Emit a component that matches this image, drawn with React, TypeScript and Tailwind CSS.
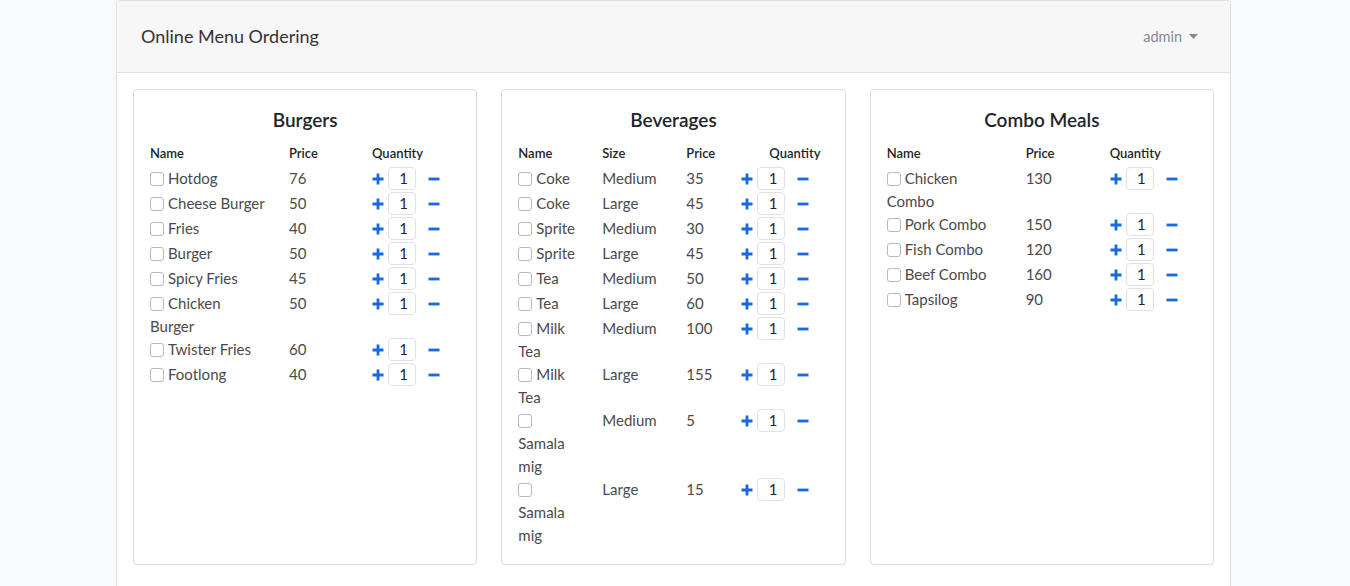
import React from "react"

type Item = { name: string[]; size?: string; price: number }

const burgers: Item[] = [
  { name: ["Hotdog"], price: 76 },
  { name: ["Cheese Burger"], price: 50 },
  { name: ["Fries"], price: 40 },
  { name: ["Burger"], price: 50 },
  { name: ["Spicy Fries"], price: 45 },
  { name: ["Chicken", "Burger"], price: 50 },
  { name: ["Twister Fries"], price: 60 },
  { name: ["Footlong"], price: 40 },
]

const beverages: Item[] = [
  { name: ["Coke"], size: "Medium", price: 35 },
  { name: ["Coke"], size: "Large", price: 45 },
  { name: ["Sprite"], size: "Medium", price: 30 },
  { name: ["Sprite"], size: "Large", price: 45 },
  { name: ["Tea"], size: "Medium", price: 50 },
  { name: ["Tea"], size: "Large", price: 60 },
  { name: ["Milk", "Tea"], size: "Medium", price: 100 },
  { name: ["Milk", "Tea"], size: "Large", price: 155 },
  { name: ["", "Samala", "mig"], size: "Medium", price: 5 },
  { name: ["", "Samala", "mig"], size: "Large", price: 15 },
]

const combos: Item[] = [
  { name: ["Chicken", "Combo"], price: 130 },
  { name: ["Pork Combo"], price: 150 },
  { name: ["Fish Combo"], price: 120 },
  { name: ["Beef Combo"], price: 160 },
  { name: ["Tapsilog"], price: 90 },
]

const Plus = () => (
  <svg width="12" height="12" viewBox="0 0 12 12" className="shrink-0">
    <path d="M4.6 0.5h2.8v4.1h4.1v2.8H7.4v4.1H4.6V7.4H0.5V4.6h4.1z" fill="#1668e3" />
  </svg>
)

const Minus = () => (
  <svg width="12" height="12" viewBox="0 0 12 12" className="shrink-0">
    <rect x="0.5" y="4.6" width="11" height="2.8" fill="#1668e3" />
  </svg>
)

const Check = () => (
  <span className="inline-block w-[14px] h-[14px] shrink-0 rounded-[3px] border border-[#b9b9b9] bg-white mr-[4px]" />
)

const NameCell = ({ lines }: { lines: string[] }) => (
  <div className="leading-[23px]">
    <div className="flex items-center h-[23px]">
      <Check />
      <span>{lines[0]}</span>
    </div>
    {lines.slice(1).map((l, i) => (
      <div key={i} className="h-[23px]">{l}</div>
    ))}
  </div>
)

const Qty = () => (
  <div className="flex items-center h-[23px]">
    <Plus />
    <div className="ml-[4px] w-[28px] h-[23px] border border-[#dee2e6] rounded-[4px] flex items-center justify-end pr-[7px] text-[15px] text-[#212529]">1</div>
    <span className="ml-[12px]"><Minus /></span>
  </div>
)

const MenuCard = ({ title, items, cols, qtyPad }: { title: string; items: Item[]; cols: string; qtyPad?: string }) => {
  const hasSize = items.some((i) => i.size)
  return (
    <div className="h-full border border-[#dcdcdc] rounded-[4px] bg-white px-4 pt-[17px] pb-[17px]">
      <h5 className="text-center text-[19px] font-semibold text-[#212529] leading-[26px] mb-[10px]">{title}</h5>
      <div className={`grid ${cols} text-[13px] font-semibold text-[#212529] leading-[20px] mb-[4px]`}>
        <div>Name</div>
        {hasSize && <div>Size</div>}
        <div>Price</div>
        <div className={qtyPad}>Quantity</div>
      </div>
      {items.map((it, idx) => (
        <div key={idx} className={`grid ${cols} items-start min-h-[25px] text-[15px] text-[#4a4a4a]`}>
          <NameCell lines={it.name} />
          {hasSize && <div className="leading-[23px]">{it.size}</div>}
          <div className="leading-[23px]">{it.price}</div>
          <Qty />
        </div>
      ))}
    </div>
  )
}

export default function App() {
  return (
    <div className="min-h-[586px] bg-[#f8f9fa]" style={{ fontFamily: "Lato, 'Noto Sans', sans-serif" }}>
      <div className="ml-[116px] w-[1115px]">
        <div className="border border-[#dfdfdf] rounded-[4px] bg-white">
          <div className="h-[72px] bg-[#f7f7f7] border-b border-[#dfdfdf] flex items-center justify-between pl-6 pr-8 rounded-t-[4px]">
            <span className="text-[18px] text-[#333]">Online Menu Ordering</span>
            <span className="flex items-center text-[14.5px] text-[#858796]">
              admin
              <svg width="9" height="5" viewBox="0 0 9 5" className="ml-[7px]">
                <path d="M0 0h9L4.5 5z" fill="#858796" />
              </svg>
            </span>
          </div>
          <div className="px-4 pt-4 pb-8 grid grid-cols-3 gap-6">
            <MenuCard title="Burgers" items={burgers} cols="grid-cols-[139px_83px_1fr]" />
            <MenuCard title="Beverages" items={beverages} cols="grid-cols-[84px_84px_55px_1fr]" qtyPad="pl-[28px]" />
            <MenuCard title="Combo Meals" items={combos} cols="grid-cols-[139px_84px_1fr]" />
          </div>
        </div>
      </div>
    </div>
  )
}
